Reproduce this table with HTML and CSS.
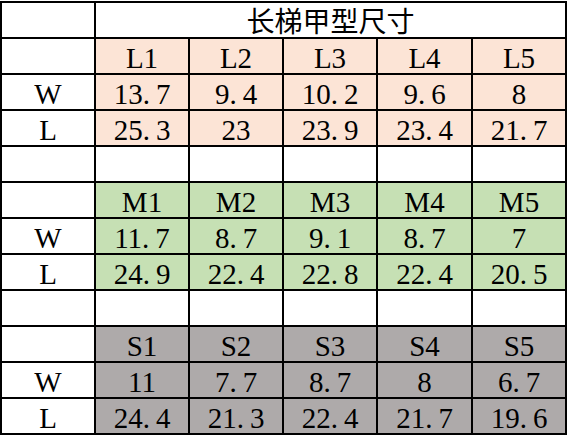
FILE: index.html
```html
<!DOCTYPE html>
<html lang="zh">
<head>
<meta charset="utf-8">
<title>长梯甲型尺寸</title>
<link rel="stylesheet" href="styles.css">
</head>
<body>
<table class="sheet">
  <colgroup>
    <col class="col-label">
    <col class="col-n">
    <col class="col-n">
    <col class="col-n">
    <col class="col-n5">
    <col class="col-n">
  </colgroup>
  <tr>
    <td></td>
    <td colspan="5" class="title">长梯甲型尺寸</td>
  </tr>
  <tr class="large">
    <td class="label"></td><td>L1</td><td>L2</td><td>L3</td><td>L4</td><td>L5</td>
  </tr>
  <tr class="large">
    <td class="label">W</td><td>13<span class="pt">.</span>7</td><td>9<span class="pt">.</span>4</td><td>10<span class="pt">.</span>2</td><td>9<span class="pt">.</span>6</td><td>8</td>
  </tr>
  <tr class="large">
    <td class="label">L</td><td>25<span class="pt">.</span>3</td><td>23</td><td>23<span class="pt">.</span>9</td><td>23<span class="pt">.</span>4</td><td>21<span class="pt">.</span>7</td>
  </tr>
  <tr class="blank">
    <td></td><td></td><td></td><td></td><td></td><td></td>
  </tr>
  <tr class="medium">
    <td class="label"></td><td>M1</td><td>M2</td><td>M3</td><td>M4</td><td>M5</td>
  </tr>
  <tr class="medium">
    <td class="label">W</td><td>11<span class="pt">.</span>7</td><td>8<span class="pt">.</span>7</td><td>9<span class="pt">.</span>1</td><td>8<span class="pt">.</span>7</td><td>7</td>
  </tr>
  <tr class="medium">
    <td class="label">L</td><td>24<span class="pt">.</span>9</td><td>22<span class="pt">.</span>4</td><td>22<span class="pt">.</span>8</td><td>22<span class="pt">.</span>4</td><td>20<span class="pt">.</span>5</td>
  </tr>
  <tr class="blank">
    <td></td><td></td><td></td><td></td><td></td><td></td>
  </tr>
  <tr class="small">
    <td class="label"></td><td>S1</td><td>S2</td><td>S3</td><td>S4</td><td>S5</td>
  </tr>
  <tr class="small">
    <td class="label">W</td><td>11</td><td>7<span class="pt">.</span>7</td><td>8<span class="pt">.</span>7</td><td>8</td><td>6<span class="pt">.</span>7</td>
  </tr>
  <tr class="small">
    <td class="label">L</td><td>24<span class="pt">.</span>4</td><td>21<span class="pt">.</span>3</td><td>22<span class="pt">.</span>4</td><td>21<span class="pt">.</span>7</td><td>19<span class="pt">.</span>6</td>
  </tr>
</table>
</body>
</html>
```

FILE: styles.css
```css
html, body {
  margin: 0;
  padding: 0;
  background: #ffffff;
}

.sheet {
  margin: 1px 0 0 0;
  border-collapse: collapse;
  table-layout: fixed;
  width: 567px;
  font-family: "Liberation Serif", "Noto Sans CJK SC", serif;
  font-size: 29px;
  color: #000000;
}

.col-label,
.col-n {
  width: 94px;
}

.col-n5 {
  width: 95px;
}

.sheet tr {
  height: 36px;
}

.sheet td {
  border: 2px solid #000000;
  padding: 0;
  height: 34px;
  line-height: 30px;
  text-align: center;
  vertical-align: bottom;
  background: #ffffff;
  white-space: nowrap;
}

.sheet .title {
  font-family: "Noto Sans CJK SC", "Liberation Serif", sans-serif;
  font-size: 28px;
  line-height: 34px;
}

.large td {
  background: #fce4d6;
}

.medium td {
  background: #c6e0b4;
}

.small td {
  background: #aeaaaa;
}

.sheet .label {
  background: #ffffff;
}

.pt {
  letter-spacing: 6px;
}
```
